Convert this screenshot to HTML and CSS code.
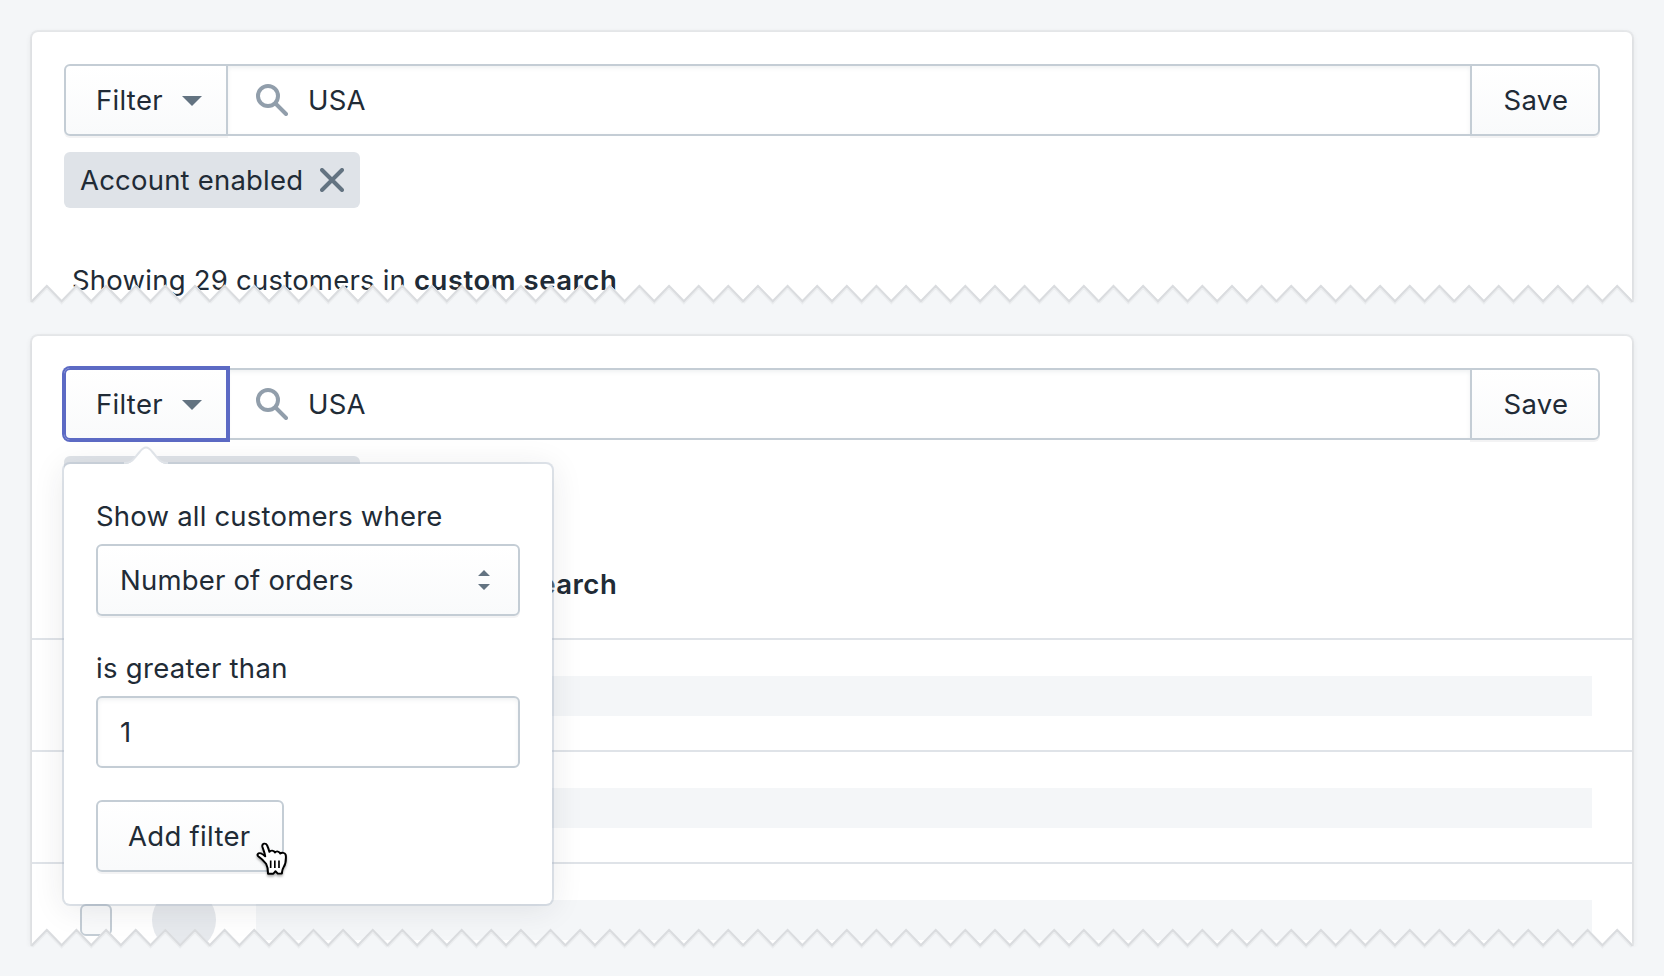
FILE: index.html
```
<!DOCTYPE html>
<html lang="en">
<head>
<meta charset="utf-8">
<title>Customers</title>
<link rel="stylesheet" href="styles.css">
</head>
<body>
<svg class="defs" width="0" height="0">
  <defs>
    <path id="teeth" d="M0 15.8L14.815 .5 29.63 15.8 44.444 .5 59.26 15.8 74.074 .5 88.89 15.8 103.704 .5 118.52 15.8 133.333 .5 148.15 15.8 162.963 .5 177.778 15.8"/>
    <g id="run">
      <path class="torn-fill" d="M0 15.800L14.815 .5 29.63 15.800 44.444 .5 59.26 15.800 74.074 .5 88.89 15.800 103.704 .5 118.52 15.800 133.333 .5 148.15 15.800 162.963 .5 177.778 15.800H178.500V36H0z"/>
      <use href="#teeth" y="2.8" class="torn-soft"/>
      <use href="#teeth" y="1.400" class="torn-line"/>
    </g>
    <g id="torn">
      <path class="torn-fill" d="M-10 19.200H1610V36H-10z"/>
      <use href="#run"/>
      <use href="#run" x="177.778"/>
      <use href="#run" x="355.556"/>
      <use href="#run" x="533.333"/>
      <use href="#run" x="711.111"/>
      <use href="#run" x="888.889"/>
      <use href="#run" x="1066.667"/>
      <use href="#run" x="1244.444"/>
      <use href="#run" x="1422.222"/>
    </g>
    <g id="search-icon">
      <circle cx="12" cy="12" r="10"/>
      <path d="M19.5 19.5L30 30"/>
    </g>
  </defs>
</svg>

<main class="page">
  <section class="card card-short">
    <div class="searchbar">
      <div class="filter">
        <button class="btn btn-filter">Filter <svg class="caret" viewBox="0 0 20 10"><path d="M0 0h20L10 10z"/></svg></button>
      </div>
      <div class="field">
        <svg class="search" viewBox="0 0 32 32"><use href="#search-icon"/></svg>
        <span>USA</span>
      </div>
      <button class="btn btn-save">Save</button>
    </div>
    <div class="tag"><span>Account enabled</span><svg class="close" viewBox="0 0 24 24"><path d="M2 2l20 20M22 2L2 22"/></svg></div>
    <p class="summary">Showing 29 customers in <b>custom search</b></p>
    <svg class="torn" viewBox="-10 0 1620 36"><use href="#torn"/></svg>
  </section>

  <section class="card card-tall">
    <div class="searchbar">
      <div class="filter">
        <button class="btn btn-filter is-focused">Filter <svg class="caret" viewBox="0 0 20 10"><path d="M0 0h20L10 10z"/></svg></button>
        <div class="popover">
          <svg class="tip" viewBox="0 0 44 20"><path class="tip-fill" d="M0 20V18C8 18 9 14 16 6C20 1.200 24 1.200 28 6C35 14 36 18 44 18V20z"/><path class="tip-line" d="M0 17C8 17 9 13.500 16 5.500C20 0 24 0 28 5.500C35 13.500 36 17 44 17"/></svg>
          <div class="label">Show all customers where</div>
          <div class="select"><span>Number of orders</span><svg class="updown" viewBox="0 0 12 20"><path d="M0 6h12L6 0zM0 14h12l-6 6z"/></svg></div>
          <div class="label label-second">is greater than</div>
          <div class="input">1</div>
          <button class="btn btn-add">Add filter</button>
          <svg class="hand" viewBox="0 0 32 34" preserveAspectRatio="none"><path d="M9.300 20.500C7 17.500 5.300 15.600 3.200 14C1 12.200 2.600 9.600 5.200 10.800C6.600 11.500 7.600 12.500 8.600 13.600C8.300 10 6.800 7 6.200 4.400C5.700 1.300 9 .4 10.200 3.200C11 5.200 11.600 7.200 12.200 9.400C13 7.600 16 7.600 16.800 10C18 8.200 20.800 8.800 21.200 11C22.800 9.400 26 10.200 26 13.200C26.200 18 26 20.500 24.200 23.500C22.800 26 22.800 27.500 22.600 29.800H19.200L17.200 27.600L15.400 30H11C11 27.500 11 24 9.300 20.500z"/><path class="lines" d="M13.200 17.500v7M16.700 17.500v7M20.200 17.500v7"/></svg>
        </div>
      </div>
      <div class="field">
        <svg class="search" viewBox="0 0 32 32"><use href="#search-icon"/></svg>
        <span>USA</span>
      </div>
      <button class="btn btn-save">Save</button>
    </div>
    <div class="tag"><span>Account enabled</span><svg class="close" viewBox="0 0 24 24"><path d="M2 2l20 20M22 2L2 22"/></svg></div>
    <p class="summary">Showing 29 customers in <b>custom search</b></p>
    <div class="rows">
      <div class="row"><i class="check"></i><i class="avatar"></i><i class="bar"></i></div>
      <div class="row"><i class="check"></i><i class="avatar"></i><i class="bar"></i></div>
      <div class="row"><i class="check"></i><i class="avatar"></i><i class="bar"></i></div>
    </div>
    <svg class="torn" viewBox="-10 0 1620 36"><use href="#torn"/></svg>
  </section>
</main>
</body>
</html>
```
FILE: styles.css
```
* { box-sizing: border-box; }
body {
  margin: 0;
  background: #f4f6f8;
  color: #212b36;
  font: 400 27.5px/41px Inter, "Liberation Sans", sans-serif;
  letter-spacing: 0.2px;
}
.defs { position: absolute; }
.page {
  width: 1664px;
  height: 976px;
  padding: 32px;
  display: flex;
  flex-direction: column;
  gap: 36px;
  overflow: hidden;
}
.card {
  position: relative;
  padding-top: 32px;
  background: #fff;
  border-radius: 6px 6px 0 0;
  box-shadow: 0 0 0 2px rgba(63, 63, 68, .05), 0 2px 6px rgba(63, 63, 68, .15);
}
.card-short { height: 268px; }
.card-tall { height: 608px; }

.searchbar { display: flex; height: 72px; margin: 0 32px; }
.filter { position: relative; width: 164px; flex: none; }
.btn {
  display: flex;
  align-items: center;
  height: 72px;
  margin: 0;
  padding: 1px 30px 0;
  border: 2px solid #c4cdd5;
  border-radius: 6px;
  background: linear-gradient(#fff, #f9fafb);
  box-shadow: 0 2px 0 rgba(22, 29, 37, .05);
  color: inherit;
  font: inherit;
  letter-spacing: 0.3px;
  white-space: nowrap;
}
.btn-filter { width: 164px; padding-right: 24px; justify-content: space-between; border-radius: 6px 0 0 6px; }
.btn-filter.is-focused {
  border-color: #5c6ac4;
  box-shadow: 0 0 0 2px #5c6ac4;
  position: relative;
  z-index: 1;
}
.caret { width: 20px; height: 10px; flex: none; fill: #637381; }
.field {
  flex: 1;
  display: flex;
  align-items: center;
  gap: 20px;
  padding-left: 28px;
  border: solid #c4cdd5;
  border-width: 2px 0;
  box-shadow: inset 0 2px 4px rgba(99, 115, 129, .1);
}
.field span, .tag span, .select span { padding-top: 1px; }
.search { width: 32px; height: 32px; fill: none; stroke: #919eab; stroke-width: 4; stroke-linecap: round; }
.btn-save { width: 130px; padding: 1px 0 0 31.5px; border-radius: 0 6px 6px 0; }

.tag {
  display: flex;
  align-items: center;
  justify-content: space-between;
  width: 296px;
  height: 56px;
  margin: 16px 32px 0;
  padding: 0 16px;
  border-radius: 6px;
  background: #dfe3e8;
}
.close { width: 24px; height: 24px; fill: none; stroke: #637381; stroke-width: 4; stroke-linecap: round; }
.summary { height: 40px; margin: 52px 40px 0; letter-spacing: 0.23px; }
b { font-weight: 600; letter-spacing: 0.52px; }

.rows { margin-top: 34px; height: 306px; overflow: hidden; }
.row {
  display: flex;
  align-items: center;
  height: 112px;
  padding: 2px 40px 0 48px;
  border-top: 2px solid #dfe3e8;
}
.check { width: 32px; height: 32px; border: 2px solid #c4cdd5; border-radius: 6px; background: #f9fafb; }
.avatar { width: 64px; height: 64px; margin: 0 40px; border-radius: 50%; background: #e6e9ed; }
.bar { flex: 1; height: 40px; background: #f4f6f8; }

.torn { position: absolute; left: -10px; bottom: -20px; width: 1620px; height: 36px; }
.torn-fill { fill: #f4f6f8; }
.torn-line { fill: none; stroke: #dadcdf; stroke-width: 2; stroke-linecap: round; }
.torn-soft { fill: none; stroke: #ebedef; stroke-width: 3; }

.popover {
  position: absolute;
  z-index: 2;
  left: 0;
  top: 96px;
  width: 488px;
  height: 440px;
  padding: 32px 32px 0;
  background: #fff;
  border-radius: 6px;
  box-shadow: 0 0 0 2px rgba(170, 184, 200, .38), 0 4px 32px rgba(39, 44, 48, .1);
}
.tip { position: absolute; left: 60px; top: -18px; width: 44px; height: 20px; }
.tip-fill { fill: #fff; }
.tip-line { fill: none; stroke: #dfe3e8; stroke-width: 2; }
.label { height: 40px; margin-bottom: 8px; }
.label-second { margin-top: 32px; letter-spacing: 0.3px; }
.select, .input {
  display: flex;
  align-items: center;
  height: 72px;
  padding: 0 28px 0 22px;
  border: 2px solid #c4cdd5;
  border-radius: 6px;
}
.select { justify-content: space-between; background: linear-gradient(#fff, #f9fafb); box-shadow: 0 2px 0 rgba(22, 29, 37, .05); }
.updown { width: 12px; height: 20px; fill: #637381; }
.input { padding-top: 1px; box-shadow: inset 0 2px 4px rgba(99, 115, 129, .1); }
.btn-add { width: 188px; margin-top: 32px; }
.hand { position: absolute; left: 191px; top: 378px; width: 38px; height: 36px; fill: #fff; stroke: #000; stroke-width: 1.7; stroke-linejoin: round; filter: drop-shadow(0 2px 1px rgba(0, 0, 0, .3)); }
.lines { stroke-width: 1.4; }
```
